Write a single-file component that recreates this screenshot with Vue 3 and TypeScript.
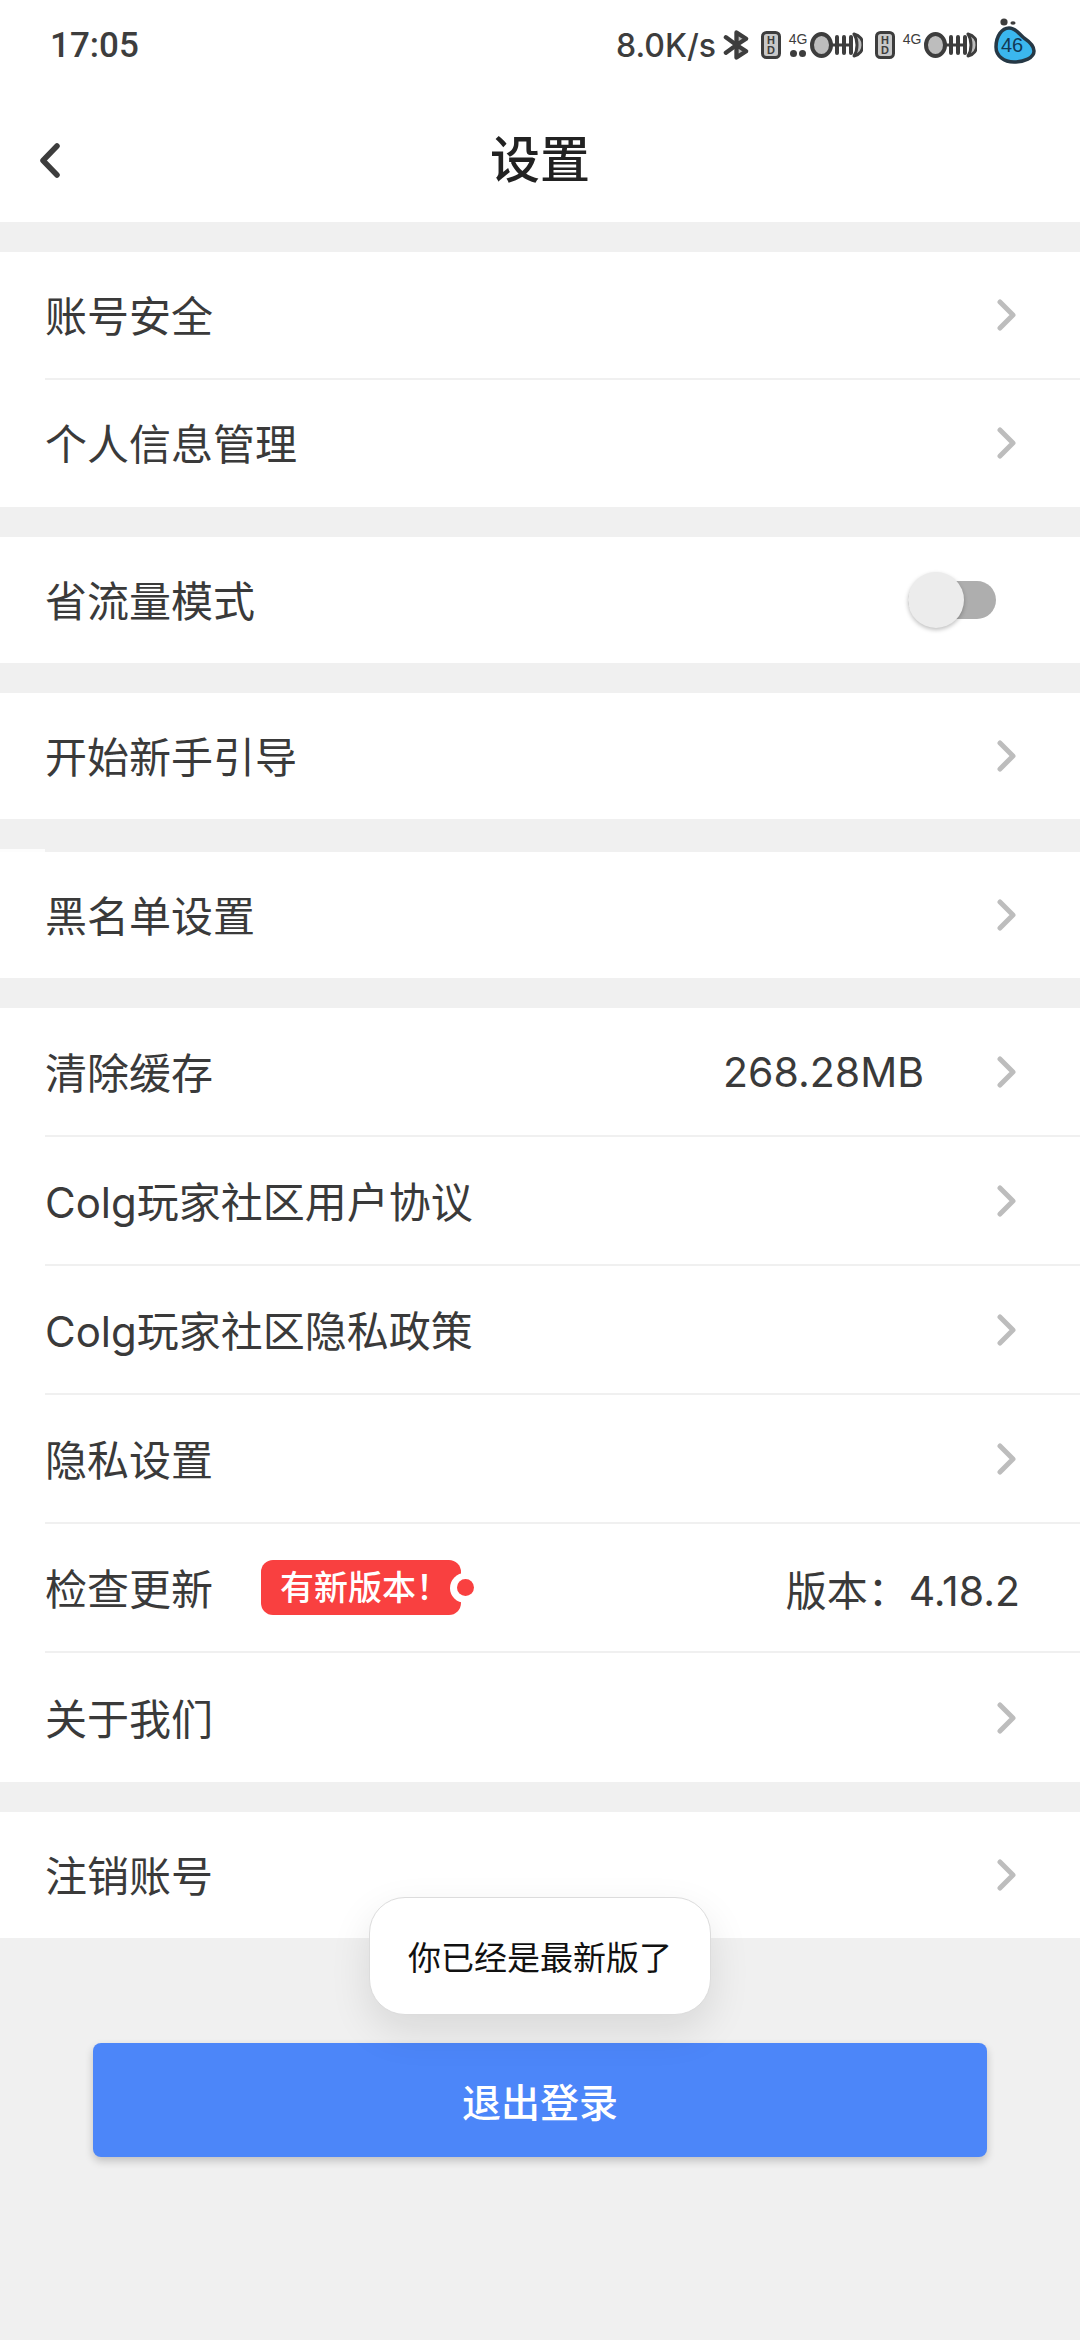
<template>
  <div class="page">
    <div class="status-bar">
      <span class="time">17:05</span>
      <div class="status-right">
        <span class="speed">8.0K/s</span>
        <svg class="bt" width="27" height="32" viewBox="0 0 28 32" fill="none" stroke="#3d3d3d" stroke-width="4.5" stroke-linejoin="round" stroke-linecap="round">
          <path d="M14 3 L24 9.5 L14 16 L24 22.5 L14 29 Z" fill="#bdbdbd"></path>
          <path d="M3 8 L14 16 L3 24"></path>
        </svg>
        <svg class="sim" width="20" height="28" viewBox="0 0 20 28">
          <rect x="1.5" y="1.5" width="17" height="25" rx="4" fill="#c8c8c8" stroke="#3d3d3d" stroke-width="3"></rect>
          <text x="10" y="13" class="sim-text">H</text>
          <text x="10" y="23" class="sim-text">D</text>
        </svg>
        <div class="net">
          <span class="net-label">4G</span>
          <span class="net-dots"><i></i><i></i></span>
        </div>
        <svg class="signal" width="53" height="28" viewBox="0 0 53 28" fill="none" stroke="#3d3d3d">
          <ellipse cx="11.5" cy="14" rx="9.5" ry="11" fill="#bdbdbd" stroke-width="4"></ellipse>
          <path d="M21 14 H41" stroke-width="3"></path>
          <path d="M27 6 V22 M34 6 V22 M41 6 V22" stroke-width="4" stroke-linecap="round"></path>
          <path d="M44 3 C56 6 56 22 44 25 C48 19 48 9 44 3 Z" fill="#bdbdbd" stroke-width="3" stroke-linejoin="round"></path>
        </svg>
        <svg class="sim sim-second" width="20" height="28" viewBox="0 0 20 28">
          <rect x="1.5" y="1.5" width="17" height="25" rx="4" fill="#c8c8c8" stroke="#3d3d3d" stroke-width="3"></rect>
          <text x="10" y="13" class="sim-text">H</text>
          <text x="10" y="23" class="sim-text">D</text>
        </svg>
        <div class="net">
          <span class="net-label">4G</span>
        </div>
        <svg class="signal" width="53" height="28" viewBox="0 0 53 28" fill="none" stroke="#3d3d3d">
          <ellipse cx="11.5" cy="14" rx="9.5" ry="11" fill="#bdbdbd" stroke-width="4"></ellipse>
          <path d="M21 14 H41" stroke-width="3"></path>
          <path d="M27 6 V22 M34 6 V22 M41 6 V22" stroke-width="4" stroke-linecap="round"></path>
          <path d="M44 3 C56 6 56 22 44 25 C48 19 48 9 44 3 Z" fill="#bdbdbd" stroke-width="3" stroke-linejoin="round"></path>
        </svg>
        <svg class="battery" width="42" height="46" viewBox="0 0 42 46">
          <circle cx="10" cy="4" r="3.6" fill="#3d3d3d"></circle>
          <ellipse cx="19" cy="5" rx="2.6" ry="1.8" fill="#3d3d3d"></ellipse>
          <path d="M2 29 C2 18 8 10 15 10 C22 10 25 16 30 20 C36 24 40 28 40 33 C40 40 30 44 20 44 C10 44 2 38 2 29 Z" fill="#3bb7ee" stroke="#263845" stroke-width="3.5"></path>
          <text x="18" y="34" class="battery-text">46</text>
        </svg>
      </div>
    </div>

    <header class="nav">
      <svg class="back" width="22" height="36" viewBox="0 0 22 36" fill="none" stroke="#3d3d3d" stroke-width="5.5" stroke-linecap="round" stroke-linejoin="round">
        <path d="M18 3 L4 17.5 L18 32"></path>
      </svg>
      <h1 class="title">设置</h1>
    </header>

    <section v-for="group in groups" :key="group.rows[0].label" class="group" :class="{ seam: group.seam }">
      <div v-for="row in group.rows" :key="row.label" class="row" :style="{ height: group.rowHeight + 'px' }">
        <span class="label">{{ row.label }}</span>
        <span v-if="row.badge" class="badge">
          <span class="badge-text">{{ row.badge }}</span>
          <i class="badge-dot"></i>
        </span>
        <span class="spacer"></span>
        <span v-if="row.value" class="value" :class="{ plain: !row.arrow }">{{ row.value }}</span>
        <span v-if="row.toggle" class="toggle"><i class="knob"></i></span>
        <svg v-if="row.arrow" class="arrow" width="22" height="32" viewBox="0 0 22 32" fill="none" stroke="#bdbdbd" stroke-width="5" stroke-linecap="round" stroke-linejoin="round">
          <path d="M4 3 L17 16 L4 29"></path>
        </svg>
      </div>
    </section>

    <div class="logout-wrap">
      <button class="logout">退出登录</button>
    </div>

    <div class="toast">你已经是最新版了</div>
  </div>
</template>

<script setup lang="ts">
interface Row {
  label: string
  value?: string
  badge?: string
  arrow?: boolean
  toggle?: boolean
}

interface Group {
  rowHeight: number
  seam?: boolean
  rows: Row[]
}

const groups: Group[] = [
  {
    rowHeight: 127.5,
    rows: [
      { label: '账号安全', arrow: true },
      { label: '个人信息管理', arrow: true },
    ],
  },
  { rowHeight: 126, rows: [{ label: '省流量模式', toggle: true }] },
  { rowHeight: 126, rows: [{ label: '开始新手引导', arrow: true }] },
  { rowHeight: 126, seam: true, rows: [{ label: '黑名单设置', arrow: true }] },
  {
    rowHeight: 129,
    rows: [
      { label: '清除缓存', value: '268.28MB', arrow: true },
      { label: 'Colg玩家社区用户协议', arrow: true },
      { label: 'Colg玩家社区隐私政策', arrow: true },
      { label: '隐私设置', arrow: true },
      { label: '检查更新', badge: '有新版本！', value: '版本：4.18.2' },
      { label: '关于我们', arrow: true },
    ],
  },
  { rowHeight: 126, rows: [{ label: '注销账号', arrow: true }] },
]
</script>

<style scoped>
.page {
  position: relative;
  width: 1080px;
  height: 2340px;
  background: #f0f0f0;
  font-family: Inter, "Noto Sans CJK SC", sans-serif;
  color: #333;
  overflow: hidden;
}

.status-bar {
  height: 90px;
  background: #fff;
  display: flex;
  justify-content: space-between;
  align-items: center;
  padding: 0 44px 0 50px;
  color: #3d3d3d;
}

.time {
  font-family: Roboto, sans-serif;
  font-size: 35px;
  font-weight: 500;
}

.status-right {
  display: flex;
  align-items: center;
}

.speed {
  font-family: Inter, sans-serif;
  font-size: 32px;
  font-weight: 500;
  margin-right: 7px;
}

.sim {
  margin-left: 11px;
}

.sim-second {
  margin-left: 12px;
}

.sim-text {
  font-family: "Liberation Sans", sans-serif;
  font-size: 11px;
  font-weight: 700;
  fill: #3d3d3d;
  text-anchor: middle;
}

.net {
  width: 20px;
  height: 28px;
  margin-left: 7px;
  display: flex;
  flex-direction: column;
  align-items: center;
}

.net-label {
  font-family: "Liberation Sans", sans-serif;
  font-size: 14px;
  line-height: 16px;
  color: #3d3d3d;
}

.net-dots {
  display: flex;
  gap: 2px;
  margin-top: 3px;
}

.net-dots i {
  width: 7px;
  height: 7px;
  border-radius: 50%;
  background: #3d3d3d;
}

.signal {
  margin-left: 2px;
}

.battery {
  margin-left: 17px;
  margin-top: -8px;
}

.battery-text {
  font-family: "Liberation Sans", sans-serif;
  font-size: 20px;
  fill: #123a55;
  text-anchor: middle;
}

.nav {
  height: 132px;
  background: #fff;
  display: flex;
  align-items: center;
  justify-content: center;
  position: relative;
  margin-bottom: 30px;
}

.back {
  position: absolute;
  left: 39px;
  top: 53px;
}

.title {
  margin: 0;
  font-size: 50px;
  font-weight: 500;
  color: #222;
}

.group {
  position: relative;
  background: #fff;
  margin-bottom: 30px;
}

.group.seam {
  margin-top: 33px;
}

.group.seam::before {
  content: "";
  position: absolute;
  left: 0;
  top: -3px;
  width: 45px;
  height: 3px;
  background: #fdfdfd;
}

.row {
  margin-left: 45px;
  padding-right: 62px;
  display: flex;
  align-items: center;
  border-bottom: 2px solid #f0f0f0;
  box-sizing: border-box;
}

.row:last-child {
  border-bottom: none;
}

.label {
  padding-top: 4px;
  font-size: 42px;
  line-height: 1;
  color: #3a3a3a;
}

.spacer {
  flex: 1;
}

.value {
  font-size: 41px;
  color: #3a3a3a;
  margin-right: 72px;
}

.value.plain {
  margin-right: -2px;
}

.arrow {
  display: block;
}

.toggle {
  position: relative;
  width: 88px;
  height: 38px;
  border-radius: 19px;
  background: #aeaeae;
  margin-right: 22px;
}

.knob {
  position: absolute;
  left: 0;
  top: -9px;
  width: 56px;
  height: 56px;
  border-radius: 50%;
  background: #ececec;
  box-shadow: 0 2px 4px rgba(0, 0, 0, 0.25);
}

.badge {
  position: relative;
  margin-left: 48px;
  width: 200px;
  height: 55px;
  background: #f94040;
  border-radius: 12px;
  display: flex;
  align-items: center;
  padding-left: 19px;
  box-sizing: border-box;
}

.badge::after {
  content: "";
  position: absolute;
  right: -19px;
  top: 12.5px;
  width: 30px;
  height: 30px;
  border-radius: 50%;
  background: #fff;
}

.badge-text {
  color: #fff;
  font-size: 34px;
  font-weight: 500;
  line-height: 1;
  white-space: nowrap;
}

.badge-dot {
  position: absolute;
  z-index: 1;
  right: -12.5px;
  top: 19px;
  width: 17px;
  height: 17px;
  border-radius: 50%;
  background: #f94040;
}

.logout-wrap {
  padding: 75px 93px 0;
}

.logout {
  display: block;
  width: 100%;
  height: 114px;
  border: none;
  border-radius: 8px;
  background: #4c86f9;
  color: #fff;
  font-family: inherit;
  font-size: 39px;
  font-weight: 500;
  box-shadow: 0 4px 8px rgba(0, 0, 0, 0.2);
}

.toast {
  position: absolute;
  left: 369px;
  top: 1897px;
  width: 342px;
  height: 118px;
  box-sizing: border-box;
  border: 1px solid #dcdcdc;
  border-radius: 36px;
  background: #fff;
  display: flex;
  align-items: center;
  justify-content: center;
  font-size: 33px;
  color: #111;
  box-shadow: 0 16px 40px rgba(0, 0, 0, 0.1);
}
</style>
